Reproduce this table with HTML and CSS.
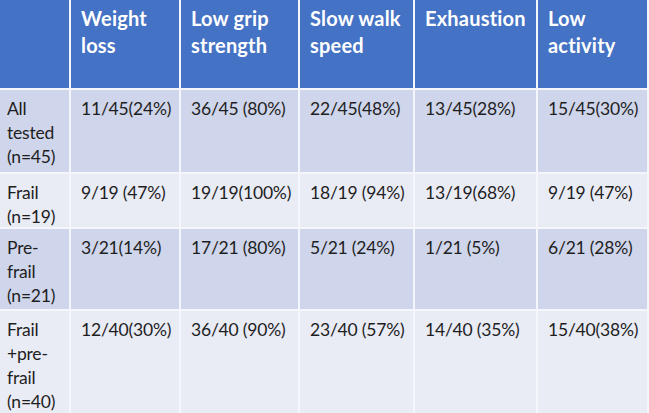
FILE: index.html
```html
<!DOCTYPE html>
<html>
<head>
<meta charset="utf-8">
<link rel="stylesheet" href="styles.css">
</head>
<body>
<div class="table">
  <div class="cell head"></div>
  <div class="cell head">Weight loss</div>
  <div class="cell head">Low grip strength</div>
  <div class="cell head">Slow walk speed</div>
  <div class="cell head">Exhaustion</div>
  <div class="cell head">Low activity</div>

  <div class="cell odd first">All<br>tested<br>(n=45)</div>
  <div class="cell odd">11/45(24%)</div>
  <div class="cell odd">36/45 (80%)</div>
  <div class="cell odd">22/45(48%)</div>
  <div class="cell odd">13/45(28%)</div>
  <div class="cell odd">15/45(30%)</div>

  <div class="cell even first">Frail<br>(n=19)</div>
  <div class="cell even">9/19 (47%)</div>
  <div class="cell even">19/19(100%)</div>
  <div class="cell even">18/19 (94%)</div>
  <div class="cell even">13/19(68%)</div>
  <div class="cell even">9/19 (47%)</div>

  <div class="cell odd first">Pre-<br>frail<br>(n=21)</div>
  <div class="cell odd">3/21(14%)</div>
  <div class="cell odd">17/21 (80%)</div>
  <div class="cell odd">5/21 (24%)</div>
  <div class="cell odd">1/21 (5%)</div>
  <div class="cell odd">6/21 (28%)</div>

  <div class="cell even first">Frail<br>+pre-<br>frail<br>(n=40)</div>
  <div class="cell even">12/40(30%)</div>
  <div class="cell even">36/40 (90%)</div>
  <div class="cell even">23/40 (57%)</div>
  <div class="cell even">14/40 (35%)</div>
  <div class="cell even">15/40(38%)</div>
</div>
</body>
</html>
```

FILE: styles.css
```css
html, body {
  margin: 0;
  padding: 0;
  background: #ffffff;
  overflow: hidden;
}
.table {
  display: grid;
  grid-template-columns: 69px 108px 117px 113px 121px 109px;
  grid-template-rows: 88px 82px 53px 80px 102px;
  gap: 2px;
  padding-right: 2px;
  width: 649px;
  height: 413px;
  box-sizing: border-box;
  background: #f4f6fb;
  font-family: Lato, "Liberation Sans", sans-serif;
  font-size: 17.5px;
  letter-spacing: -0.2px;
  line-height: 24px;
  color: #1e1e1e;
}
.cell {
  padding: 7px 0 0 10px;
  box-sizing: border-box;
  overflow: hidden;
  white-space: nowrap;
}
.cell.first {
  padding-left: 7px;
}
.head {
  background: #4472c4;
  color: #ffffff;
  font-weight: bold;
  font-size: 20px;
  letter-spacing: 0.2px;
  line-height: 27px;
  padding-top: 5px;
  white-space: normal;
}
.odd {
  background: #cfd5ea;
}
.even {
  background: #e9ebf5;
}
```
